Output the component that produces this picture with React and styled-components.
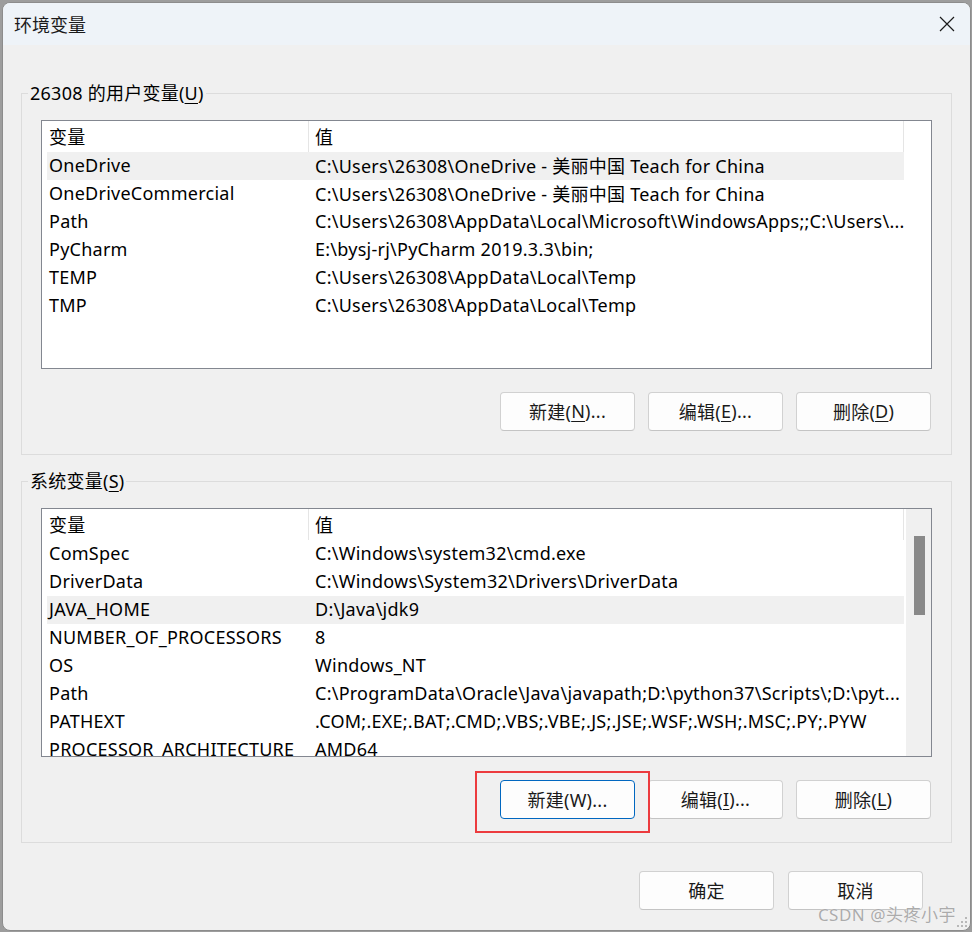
import React from "react";
import styled, { createGlobalStyle } from "styled-components";

const FONT = `"Noto Sans", "Noto Sans CJK SC", sans-serif`;

const Global = createGlobalStyle`
  html, body { margin: 0; padding: 0; }
  body {
    background: #9d9d9d;
    width: 972px;
    height: 932px;
    overflow: hidden;
    font-family: ${FONT};
    font-size: 18px;
    letter-spacing: 0.25px;
    color: #000;
  }
`;

const Window = styled.div`
  position: relative;
  box-sizing: border-box;
  margin: 2px 0 0 2px;
  width: 969px;
  height: 929px;
  border: 1px solid #8c8c8c;
  border-radius: 8px;
  background: #f0f0f0;
  overflow: hidden;
  display: flex;
  flex-direction: column;
`;

const TitleBar = styled.div`
  height: 42px;
  flex: none;
  background: #eef3f8;
  display: flex;
  align-items: center;
  justify-content: space-between;
  padding: 0 15px 0 11px;
`;

const Title = styled.span`
  font-size: 18px;
  color: #1a1a1a;
  letter-spacing: 0;
`;

const CloseIcon = styled.svg`
  width: 16px;
  height: 16px;
  display: block;
`;

const Content = styled.div`
  padding: 36px 18px 0 18px;
  display: flex;
  flex-direction: column;
`;

const Group = styled.fieldset`
  margin: ${(p) => p.$top}px 0 0 0;
  padding: 0;
  border: 1px solid #dcdcdc;
  min-width: 0;
`;

const Legend = styled.legend`
  margin-left: 6px;
  padding: 0 2px;
  font-size: 18px;
  line-height: 24px;
  color: #000;
`;

const GroupBody = styled.div`
  padding: 15px 19px 23px 19px;
  display: flex;
  flex-direction: column;
`;

const List = styled.div`
  box-sizing: border-box;
  height: 249px;
  border: 1px solid #838790;
  background: #fff;
  overflow: hidden;
  display: flex;
`;

const ListBody = styled.div`
  margin-left: 5px;
  width: 857px;
  flex: none;
  display: flex;
  flex-direction: column;
`;

const HeaderRow = styled.div`
  display: grid;
  grid-template-columns: 262px 595px;
  height: 31px;
  flex: none;
`;

const HeaderCell = styled.div`
  border-right: 1px solid #e5e5e5;
  display: flex;
  align-items: center;
  padding-left: ${(p) => (p.$first ? 2 : 6)}px;
  padding-bottom: 1px;
  white-space: nowrap;
`;

const Row = styled.div`
  display: grid;
  grid-template-columns: 262px 595px;
  height: 28px;
  flex: none;
  background: ${(p) => (p.$selected ? "#f0f0f0" : "transparent")};
`;

const Cell = styled.div`
  display: flex;
  align-items: center;
  padding-left: ${(p) => (p.$first ? 2 : 6)}px;
  padding-bottom: 2px;
  white-space: nowrap;
  overflow: hidden;
  text-overflow: ellipsis;
`;

const ScrollTrack = styled.div`
  margin-left: auto;
  width: 25px;
  flex: none;
  background: #f0f0f0;
  padding-top: 27px;
  display: flex;
  flex-direction: column;
  align-items: center;
`;

const ScrollThumb = styled.div`
  width: 11px;
  height: 79px;
  margin-left: 1px;
  background: #898989;
`;

const ButtonRow = styled.div`
  margin-top: 23px;
  display: flex;
  justify-content: flex-end;
  gap: 13px;
  padding-right: 1px;
`;

const Button = styled.div`
  position: relative;
  box-sizing: border-box;
  width: 135px;
  height: 39px;
  border: 1px solid ${(p) => (p.$focused ? "#0067c0" : "#d1d1d1")};
  border-bottom-color: ${(p) => (p.$focused ? "#0067c0" : "#c4c4c4")};
  border-radius: 4px;
  background: #fdfdfd;
  display: flex;
  align-items: center;
  justify-content: center;
  padding-bottom: 1px;
  font-size: 18px;
  color: #1a1a1a;
  white-space: nowrap;
`;

const Key = styled.span`
  text-decoration: underline;
  text-decoration-thickness: 1px;
  text-underline-offset: 3px;
`;

const Footer = styled.div`
  margin-top: 28px;
  display: flex;
  justify-content: flex-end;
  gap: 14px;
  padding-right: 29px;
`;

const Annotation = styled.div`
  position: absolute;
  left: 472px;
  top: 768px;
  width: 175px;
  height: 62px;
  box-sizing: border-box;
  border: 2px solid #ec3b3e;
  pointer-events: none;
`;

const Watermark = styled.div`
  position: absolute;
  right: 14px;
  bottom: 4px;
  font-size: 17px;
  line-height: 22px;
  letter-spacing: 0.5px;
  color: #ababab;
  text-shadow: 0 0 1px #fff;
  white-space: nowrap;
`;

const Grip = styled.svg`
  position: absolute;
  right: 2px;
  bottom: 2px;
  width: 12px;
  height: 12px;
`;

const userVars = [
  ["OneDrive", "C:\\Users\\26308\\OneDrive - 美丽中国 Teach for China", true],
  ["OneDriveCommercial", "C:\\Users\\26308\\OneDrive - 美丽中国 Teach for China"],
  ["Path", "C:\\Users\\26308\\AppData\\Local\\Microsoft\\WindowsApps;;C:\\Users\\..."],
  ["PyCharm", "E:\\bysj-rj\\PyCharm 2019.3.3\\bin;"],
  ["TEMP", "C:\\Users\\26308\\AppData\\Local\\Temp"],
  ["TMP", "C:\\Users\\26308\\AppData\\Local\\Temp"],
];

const sysVars = [
  ["ComSpec", "C:\\Windows\\system32\\cmd.exe"],
  ["DriverData", "C:\\Windows\\System32\\Drivers\\DriverData"],
  ["JAVA_HOME", "D:\\Java\\jdk9", true],
  ["NUMBER_OF_PROCESSORS", "8"],
  ["OS", "Windows_NT"],
  ["Path", "C:\\ProgramData\\Oracle\\Java\\javapath;D:\\python37\\Scripts\\;D:\\pyt..."],
  ["PATHEXT", ".COM;.EXE;.BAT;.CMD;.VBS;.VBE;.JS;.JSE;.WSF;.WSH;.MSC;.PY;.PYW"],
  ["PROCESSOR_ARCHITECTURE", "AMD64"],
];

function VarList({ rows, scroll }) {
  return (
    <List>
      <ListBody>
        <HeaderRow>
          <HeaderCell $first>变量</HeaderCell>
          <HeaderCell>值</HeaderCell>
        </HeaderRow>
        {rows.map(([name, value, sel], i) => (
          <Row key={i} $selected={sel}>
            <Cell $first>{name}</Cell>
            <Cell>{value}</Cell>
          </Row>
        ))}
      </ListBody>
      {scroll && (
        <ScrollTrack>
          <ScrollThumb />
        </ScrollTrack>
      )}
    </List>
  );
}

function Btn({ pre, k, post, focused }) {
  return (
    <Button $focused={focused}>
      {pre}
      {k && <Key>{k}</Key>}
      {post}
    </Button>
  );
}

export default function App() {
  return (
    <>
      <Global />
      <Window>
        <TitleBar>
          <Title>环境变量</Title>
          <CloseIcon viewBox="0 0 16 16">
            <path d="M1 1 L15 15 M15 1 L1 15" stroke="#1b1b1b" strokeWidth="1.2" fill="none" />
          </CloseIcon>
        </TitleBar>
        <Content>
          <Group $top={0}>
            <Legend>
              26308 的用户变量(<Key>U</Key>)
            </Legend>
            <GroupBody>
              <VarList rows={userVars} />
              <ButtonRow>
                <Btn pre="新建(" k="N" post=")..." />
                <Btn pre="编辑(" k="E" post=")..." />
                <Btn pre="删除(" k="D" post=")" />
              </ButtonRow>
            </GroupBody>
          </Group>
          <Group $top={14}>
            <Legend>
              系统变量(<Key>S</Key>)
            </Legend>
            <GroupBody>
              <VarList rows={sysVars} scroll />
              <ButtonRow>
                <Btn pre="新建(W)..." focused />
                <Btn pre="编辑(" k="I" post=")..." />
                <Btn pre="删除(" k="L" post=")" />
              </ButtonRow>
            </GroupBody>
          </Group>
          <Footer>
            <Btn pre="确定" />
            <Btn pre="取消" />
          </Footer>
        </Content>
        <Annotation />
        <Watermark>CSDN @头疼小宇</Watermark>
        <Grip viewBox="0 0 12 12">
          {[
            [9, 1], [9, 5], [5, 5], [9, 9], [5, 9], [1, 9],
          ].map(([x, y], i) => (
            <rect key={i} x={x} y={y} width="2" height="2" fill="#b8b8b8" />
          ))}
        </Grip>
      </Window>
    </>
  );
}
